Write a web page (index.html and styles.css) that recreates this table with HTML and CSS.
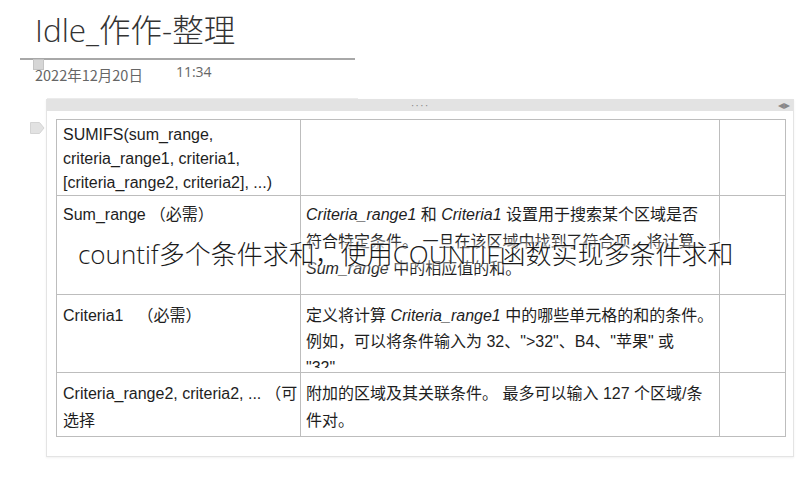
FILE: index.html
```html
<!DOCTYPE html>
<html lang="zh">
<head>
<meta charset="utf-8">
<title>Idle_作作-整理</title>
<link rel="stylesheet" href="styles.css">
</head>
<body>
<div class="page">
  <h1 class="title">Idle_作作-整理</h1>
  <div class="rule"><span class="handle"></span></div>
  <div class="meta">
    <span class="date">2022年12月20日</span>
    <span class="time">11:34</span>
  </div>
  <div class="sep"></div>
  <div class="panel">
    <svg class="marker" width="15" height="12" viewBox="0 0 15 12"><path d="M0.5 0.5 H9.5 L14 6 L9.5 11.5 H0.5 Z" fill="#e2e2e2" stroke="#d4d4d4"/></svg>
    <div class="bar">
      <span class="dots">····</span>
      <span class="arrows">◂▸</span>
    </div>
    <table class="grid">
      <colgroup><col class="c1"><col class="c2"><col class="c3"></colgroup>
      <tr class="r1">
        <td>SUMIFS(sum_range,<br>criteria_range1, criteria1,<br>[criteria_range2, criteria2], ...)</td>
        <td></td><td></td>
      </tr>
      <tr class="r2">
        <td>Sum_range<span class="req req-s">（必需）</span></td>
        <td><i>Criteria_range1</i> 和 <i>Criteria1</i> 设置用于搜索某个区域是否<br>符合特定条件。 一旦在该区域中找到了符合项，将计算<br><i>Sum_range</i> 中的相应值的和。</td>
        <td></td>
      </tr>
      <tr class="r3">
        <td>Criteria1<span class="req">（必需）</span></td>
        <td><div class="clip">定义将计算 <i>Criteria_range1</i> 中的哪些单元格的和的条件。<br>例如，可以将条件输入为 32、"&gt;32"、B4、"苹果" 或<br>"32"。</div></td>
        <td></td>
      </tr>
      <tr class="r4">
        <td>Criteria_range2, criteria2, ...<span class="opt">（可</span><br>选择</td>
        <td>附加的区域及其关联条件。 最多可以输入 127 个区域/条<br>件对。</td>
        <td></td>
      </tr>
    </table>
  </div>
  <div class="overlay">countif多个条件求和，使用COUNTIF函数实现多条件求和</div>
</div>
</body>
</html>
```

FILE: styles.css
```css
html, body {
  margin: 0;
  padding: 0;
  background: #fff;
}
.page {
  position: relative;
  width: 808px;
  height: 490px;
  overflow: hidden;
  font-family: "Liberation Sans", "Noto Sans CJK SC", sans-serif;
  color: #222;
}
.title {
  margin: 0;
  padding: 10px 0 0 35px;
  height: 40px;
  font-family: "Open Sans", "Noto Sans CJK SC", sans-serif;
  font-weight: 300;
  font-size: 31.5px;
  line-height: 40px;
  color: #333;
}
.rule {
  position: relative;
  margin: 8px 0 0 20px;
  width: 335px;
  height: 0;
  border-top: 2px solid #a8a8a8;
}
.handle {
  position: absolute;
  left: 13px;
  top: -1px;
  width: 9px;
  height: 9px;
  background: #d6d6d6;
  border: 1px solid #c4c4c4;
}
.meta {
  display: flex;
  align-items: flex-start;
  padding-left: 35px;
  height: 26px;
  color: #666;
}
.date {
  font-family: "Noto Sans CJK SC", sans-serif;
  font-size: 14.5px;
  line-height: 16px;
  margin-top: 7px;
}
.time {
  font-family: "Open Sans", sans-serif;
  font-size: 14px;
  line-height: 16px;
  margin-top: 4px;
  margin-left: 33px;
}
.sep {
  margin: 12px 0 0 47px;
  width: 311px;
  height: 1px;
  background: #ececec;
}
.panel {
  position: relative;
  margin-left: 46px;
  width: 746px;
  height: 357px;
  border: 1px solid #e4e4e4;
  border-top: none;
  box-shadow: 0 1px 2px rgba(0,0,0,0.06);
}
.marker {
  position: absolute;
  left: -17px;
  top: 23px;
}
.bar {
  position: relative;
  height: 12px;
  background: #e3e3e3;
  display: flex;
  justify-content: center;
  align-items: center;
}
.dots {
  font-size: 11px;
  line-height: 10px;
  color: #888;
  letter-spacing: 1px;
}
.arrows {
  position: absolute;
  right: 3px;
  top: 0;
  font-size: 12px;
  line-height: 12px;
  color: #888;
}
.grid {
  width: 729px;
  margin: 8px 0 0 9px;
  border-collapse: collapse;
  table-layout: fixed;
  font-size: 16px;
  line-height: 26px;
  color: #1e1e1e;
}
.c1 { width: 244px; }
.c2 { width: 419px; }
.c3 { width: 66px; }
.grid td {
  border: 1px solid #bdbdbd;
  vertical-align: top;
  padding: 3px 0 0 6px;
  white-space: nowrap;
  overflow: hidden;
}
.grid td + td { padding-left: 5px; }
.r1 { height: 76px; }
.r1 td { line-height: 24px; }
.r2 { height: 99px; }
.r2 td { padding-top: 5px; line-height: 27px; }
.r3 { height: 78px; }
.r3 td { padding-top: 8px; }
.clip {
  height: 65px;
  overflow: hidden;
}
.r4 { height: 64px; }
.r4 td { padding-top: 7px; line-height: 27px; }
.req { margin-left: 14px; }
.req-s { margin-left: 4px; }
.opt { margin-left: 4px; }
.overlay {
  position: absolute;
  left: 78px;
  top: 237px;
  font-family: "Open Sans", "Noto Sans CJK SC", sans-serif;
  font-weight: 300;
  font-size: 26px;
  line-height: 34px;
  color: #1a1a1a;
  white-space: nowrap;
  text-shadow: 0 0 3px #fff, 0 0 6px #fff, 0 0 9px #fff, 0 0 12px #fff;
}
```
